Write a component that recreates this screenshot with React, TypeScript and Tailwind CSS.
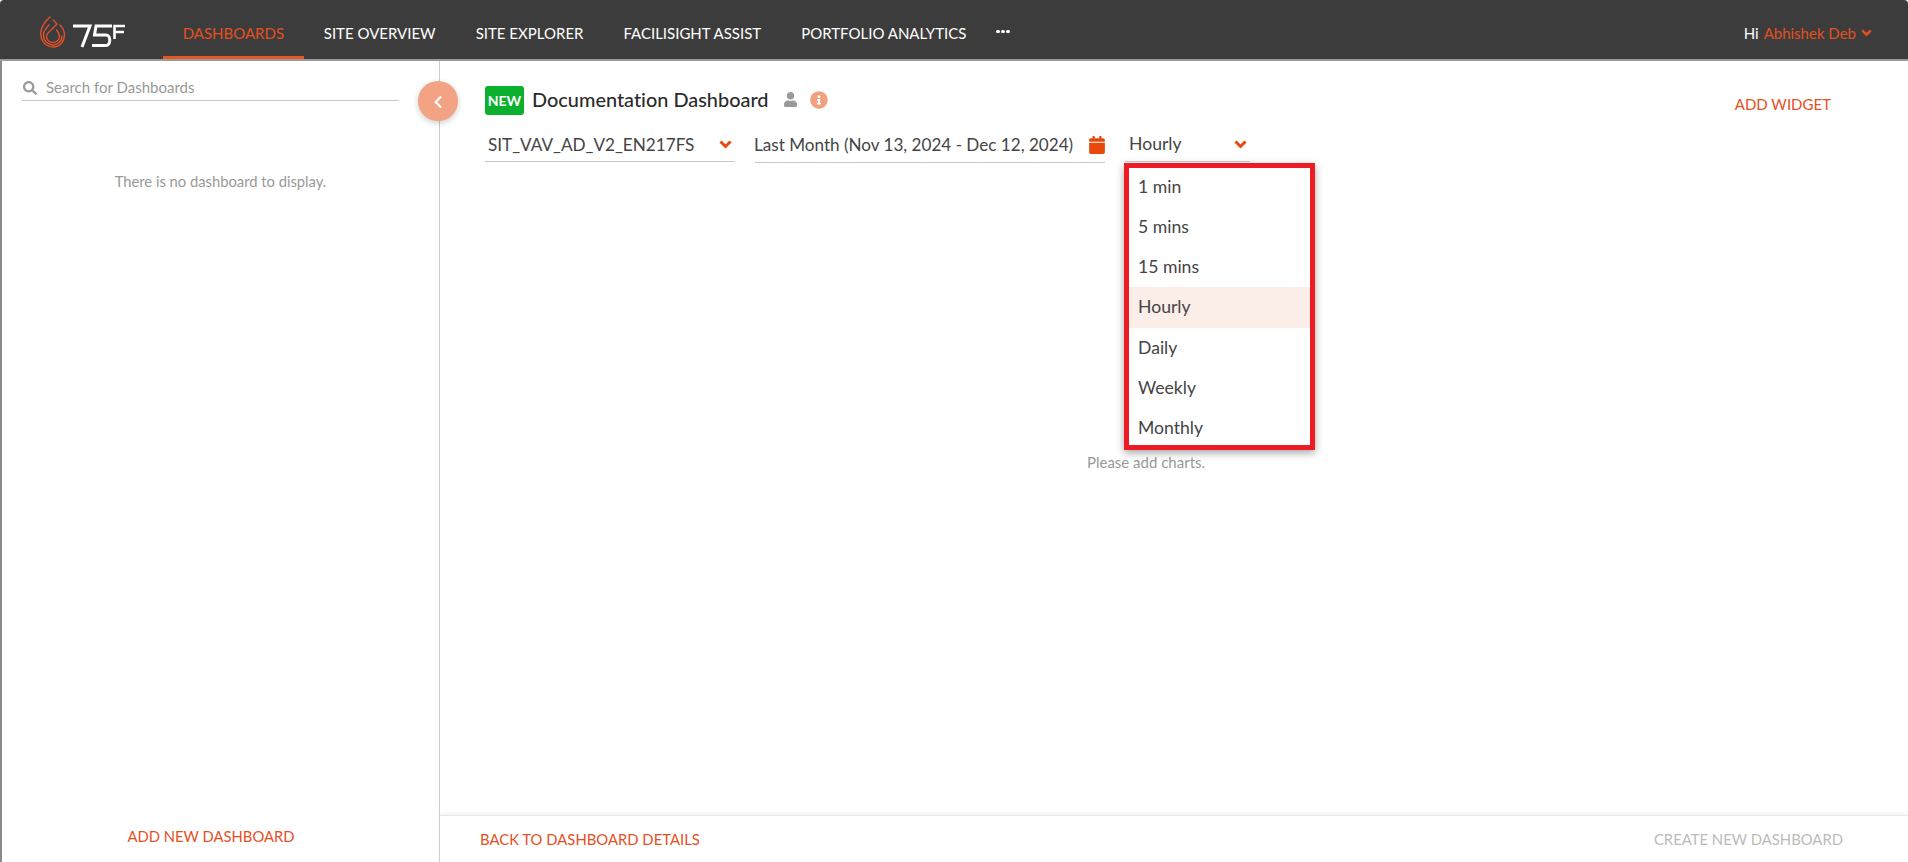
import React from "react";
import { FaChevronLeft, FaSearch, FaUser, FaCalendar, FaInfoCircle } from "react-icons/fa";

const nav = ["SITE OVERVIEW", "SITE EXPLORER", "FACILISIGHT ASSIST", "PORTFOLIO ANALYTICS"];
const options = ["1 min", "5 mins", "15 mins", "Hourly", "Daily", "Weekly", "Monthly"];

function Chev({ w = 13, h = 9, color = "#e8480c" }: { w?: number; h?: number; color?: string }) {
  return (
    <svg width={w} height={h} viewBox="0 0 13 9" fill="none" className="shrink-0">
      <path d="M1.5 1.5 L6.5 6.5 L11.5 1.5" stroke={color} strokeWidth="3" />
    </svg>
  );
}

function Logo() {
  return (
    <svg width="86" height="32" viewBox="0 0 86 32" fill="none">
      <g stroke="#e0502a" strokeWidth="1.4" fill="none" strokeLinecap="round">
        <path d="M10 1 L6 5 C2 10 0.8 13 0.8 18 C0.8 25 6 31 13 31 C20 31 24.5 25 24.5 19 C24.5 15 23 12 20 9" />
        <path d="M13 4 L17 8 L11 14 C8 16.5 6.5 18 6.5 20.5 C6.5 24 9.5 26.5 13 26.5 C16.5 26.5 19.5 24 19.5 20.5 C19.5 18 18.5 16 16.5 14" />
        <path d="M9 9 C5 13 3.5 16 3.5 19.5 C3.5 25 8 29 13 29 C18 29 22 25 22 20" />
      </g>
      <g stroke="#ffffff" strokeWidth="3" fill="none">
        <path d="M33 10 H50 L42 31" />
        <path d="M72 10 H56 L54.5 19 H66 C71 19 71 29.5 66 29.5 H52" />
        <path d="M85 10 H74.5 V23 M74.5 16 H84" strokeWidth="2.6" />
      </g>
    </svg>
  );
}

export default function App() {
  return (
    <div className="h-[862px] w-[1908px] flex flex-col bg-white overflow-hidden font-['Lato','Liberation_Sans',sans-serif] text-[#444] [font-variant-ligatures:none]">
      <header className="h-[61px] shrink-0 bg-[#3c3c3c] border-b-2 border-[#9a9a9a] rounded-t-[4px] flex items-stretch text-[15px]">
        <div className="w-[163px] shrink-0 pl-[40px] flex items-center pt-[5px]">
          <Logo />
        </div>
        <div className="px-[19.7px] pt-[10px] flex items-center text-[#e5501f] border-b-[3px] border-[#e5581f]">DASHBOARDS</div>
        {nav.map((n) => (
          <div key={n} className="px-[20px] pt-[7px] flex items-center text-white">{n}</div>
        ))}
        <div className="flex items-center pl-[10px] pt-[4px] gap-[1.5px]">
          <span className="w-[3.5px] h-[3.5px] rounded-full bg-white" />
          <span className="w-[3.5px] h-[3.5px] rounded-full bg-white" />
          <span className="w-[3.5px] h-[3.5px] rounded-full bg-white" />
        </div>
        <div className="ml-auto pr-[36px] pt-[7px] flex items-center">
          <span className="text-white">Hi</span>
          <span className="ml-[5px] text-[#e5501f]">Abhishek Deb</span>
          <span className="ml-[5px]"><Chev w={11} h={8} color="#e5501f" /></span>
        </div>
      </header>

      <div className="flex flex-1 min-h-0 relative">
        <aside className="w-[440px] shrink-0 border-l-2 border-r border-l-[#8a8a8a] border-r-[#cccccc] flex flex-col relative">
          <div className="ml-[20px] mt-[17px] w-[377px] h-[23px] pb-[3px] border-b border-[#c8c8c8] flex items-center">
            <FaSearch className="text-[#999] ml-[1px]" size={14} />
            <span className="ml-[9px] text-[15px] text-[#999]">Search for Dashboards</span>
          </div>
          <div className="mt-[69px] text-center text-[14.75px] text-[#999]">There is no dashboard to display.</div>
          <div className="mt-auto h-[47px] pb-[4px] flex items-center justify-center text-[14.8px] text-[#e5501f] pr-[19px]">ADD NEW DASHBOARD</div>
          <button className="absolute left-[416px] top-[20px] w-[40px] h-[40px] rounded-full bg-[#f3a283] shadow-[0_2px_6px_rgba(0,0,0,0.2)] flex items-center justify-center z-10">
            <FaChevronLeft className="text-white mt-[1px]" size={14} />
          </button>
        </aside>

        <main className="flex-1 min-w-0 flex flex-col">
          <div className="flex-1 min-h-0 flex flex-col relative">
            <div className="flex items-center pl-[45px] pr-[77px] mt-[25px] h-[29px]">
              <span className="w-[39px] h-[29px] rounded-[3px] bg-[#0bb02f] text-white text-[14px] font-bold flex items-center justify-center">NEW</span>
              <span className="ml-[8px] pb-[2px] text-[19.9px] font-medium text-[#2b2b2b]">Documentation Dashboard</span>
              <FaUser className="ml-[14px] mb-[2px] text-[#9a9a9a]" size={15} />
              <FaInfoCircle className="ml-[12px] mb-[2px] text-[#f0a17f]" size={18} />
              <span className="ml-auto pt-[8px] text-[15px] text-[#e5501f]">ADD WIDGET</span>
            </div>
            <div className="flex pl-[45px] mt-[16px]">
              <div className="w-[250px] h-[31px] pb-[3px] border-b border-[#c8c8c8] flex items-center justify-between pl-[3px] pr-[3px] text-[17.15px]">
                <span>SIT_VAV_AD_V2_EN217FS</span>
                <Chev />
              </div>
              <div className="ml-[20px] w-[350px] h-[32px] pb-[4px] border-b border-[#c8c8c8] flex items-center justify-between text-[17.1px]">
                <span className="ml-[-1px]">Last Month (Nov 13, 2024 - Dec 12, 2024)</span>
                <FaCalendar className="text-[#e8480c] mr-[-1px]" size={18} />
              </div>
              <div className="relative ml-[20px] w-[125px] h-[31px] pb-[3px] border-b border-[#c8c8c8] flex items-center justify-between pl-[4px] pr-[3px] text-[17.6px]">
                <span>Hourly</span>
                <Chev />
                <div className="absolute left-[-1px] top-[32px] w-[191px] h-[287px] border-[5px] border-[#ed1c24] bg-white overflow-hidden shadow-[0_3px_8px_rgba(0,0,0,0.35)] z-20">
                  <div className="mt-[-1px]">
                    {options.map((o) => (
                      <div key={o} className={`h-[40.17px] pl-[9px] flex items-center text-[17.6px] ${o === "Hourly" ? "bg-[#fbede8]" : ""}`}>{o}</div>
                    ))}
                  </div>
                </div>
              </div>
            </div>
            <div className="mt-[288px] text-center text-[15px] text-[#999] pr-[56px]">Please add charts.</div>
          </div>
          <footer className="h-[47px] shrink-0 border-t border-[#e8e8e8] shadow-[0_-2px_4px_rgba(0,0,0,0.05)] flex items-center justify-between pl-[40px] pr-[65px] text-[14.85px]">
            <span className="text-[#e5501f]">BACK TO DASHBOARD DETAILS</span>
            <span className="text-[#bbbbbb]">CREATE NEW DASHBOARD</span>
          </footer>
        </main>
      </div>
    </div>
  );
}
